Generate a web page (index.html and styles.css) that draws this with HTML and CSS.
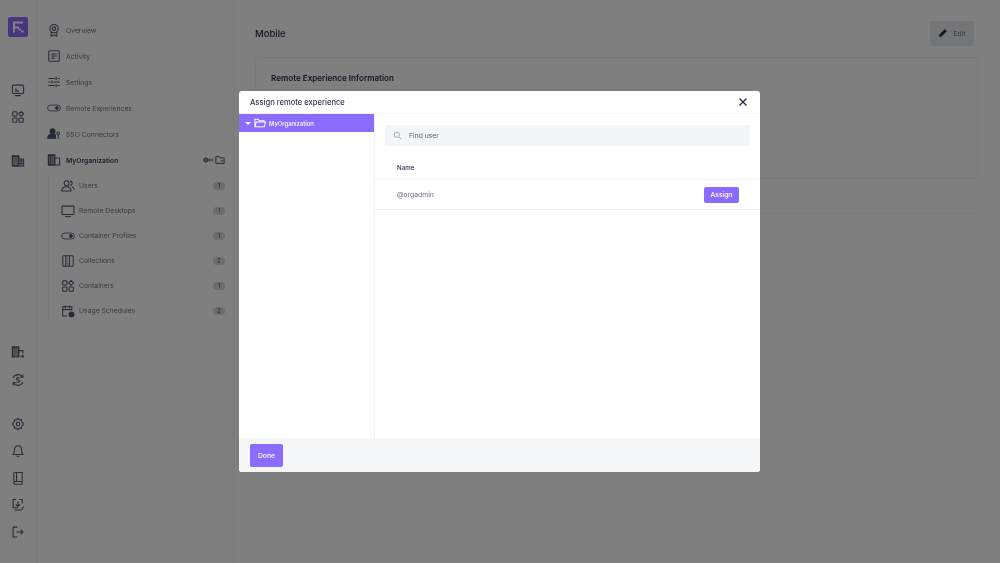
FILE: index.html
```html
<!DOCTYPE html>
<html lang="en">
<head>
<meta charset="utf-8">
<title>Assign remote experience</title>
<link rel="stylesheet" href="styles.css">
</head>
<body>
<div class="app">
  <aside class="rail">
    <div class="logo"><svg class="logo-mark" viewBox="0 0 20 20" width="20" height="20"><path d="M5 4.500h10v2H7v3h4v2H7v4H5zM10.500 11.500h2.500v2h-2.500zM13 13.500h2.500v2H13z"/></svg></div>
    <div class="rail-group rail-top">
      <svg class="ic" viewBox="0 0 20 20"><rect x="2" y="3" width="16" height="12" rx="1.500"/><path d="M6 18h8M6 8l5 5M6 11l2 2"/></svg>
      <svg class="ic" viewBox="0 0 20 20"><rect x="2.500" y="2.500" width="6" height="6" rx="1"/><rect x="2.500" y="11.500" width="6" height="6" rx="1"/><rect x="11.500" y="11.500" width="6" height="6" rx="1"/><path d="M14.500 2l3.500 3.500-3.500 3.500-3.500-3.500z"/></svg>
    </div>
    <div class="rail-org">
      <svg class="ic" viewBox="0 0 20 20"><path class="tint" d="M2 3h9v14H2z"/><path d="M2 17V3h9v14M11 7h7v10H2M11 10h7M11 13.500h7M14.500 7v10"/></svg>
    </div>
    <div class="rail-group rail-lower">
      <svg class="ic" viewBox="0 0 20 20"><path class="tint" d="M2 3h9v14H2z"/><path d="M2 17V3h9v14M11 8h6v4M13 16h5M16 14l2 2-2 2"/></svg>
      <svg class="ic" viewBox="0 0 20 20"><path d="M3 7a8 8 0 0 1 14-1M17 13a8 8 0 0 1-14 1M17 2v4h-4M3 18v-4h4M12.500 7.500c-1-1-5-1-5 1s5 1 5 3-4 2-5 1"/></svg>
    </div>
    <div class="rail-group rail-bottom">
      <svg class="ic" viewBox="0 0 20 20"><circle cx="10" cy="10" r="2.500"/><path d="M10 2l2 2.200 3-.2.600 3 2.400 3-2.400 3-.6 3-3-.2-2 2.200-2-2.200-3 .2-.6-3L2 10l2.400-3 .6-3 3 .2z"/></svg>
      <svg class="ic" viewBox="0 0 20 20"><path d="M10 2.500a5 5 0 0 0-5 5c0 5-1.500 6-2 7.500h14c-.5-1.500-2-2.500-2-7.500a5 5 0 0 0-5-5zM8 17.500h4"/></svg>
      <svg class="ic" viewBox="0 0 20 20"><path d="M4 16V4a2 2 0 0 1 2-2h10v13H6a2 2 0 0 0 0 4h10v-4M8 2v13"/></svg>
      <svg class="ic" viewBox="0 0 20 20"><path d="M7 2H3v12h7M12 2h4v6M10 5v7M7 9l3 3 3-3M5 17h10l3-5"/></svg>
      <svg class="ic" viewBox="0 0 20 20"><path d="M9 3H3v14h6M8 10h9M14 7l3 3-3 3"/></svg>
    </div>
  </aside>

  <nav class="side">
    <ul class="menu">
      <li class="item"><svg class="ic" viewBox="0 0 20 20"><circle cx="10" cy="8" r="6"/><circle cx="10" cy="8" r="2.500"/><path d="M6 13v6l4-2 4 2v-6"/></svg><span>Overview</span></li>
      <li class="item"><svg class="ic" viewBox="0 0 20 20"><rect x="2.500" y="2.500" width="15" height="15" rx="1.500"/><path d="M6 7h8M6 10h8M6 13h5"/></svg><span>Activity</span></li>
      <li class="item"><svg class="ic" viewBox="0 0 20 20"><path d="M2 5h9M15 5h3M13 3v4M2 10h3M9 10h9M7 8v4M2 15h9M15 15h3M13 13v4"/></svg><span>Settings</span></li>
      <li class="item"><svg class="ic" viewBox="0 0 24 20"><rect x="1" y="5" width="22" height="10" rx="5"/><circle cx="17" cy="10" r="2.500" class="solid"/></svg><span>Remote Experiences</span></li>
      <li class="item"><svg class="ic" viewBox="0 0 20 20"><circle cx="8" cy="6" r="3.500" class="solid"/><path class="solid" d="M1 16c0-4 3-6 7-6 2 0 3 .5 4 1v5z"/><circle cx="16" cy="9" r="2"/><path d="M16 11v6"/></svg><span>SSO Connectors</span></li>
      <li class="item org"><svg class="ic" viewBox="0 0 20 20"><path class="tint" d="M2 3h9v14H2z"/><path d="M2 17V3h9v14M11 7h7v10H2M5.500 3v14"/></svg><span class="org-name">MyOrganization</span>
        <span class="org-tools"><svg class="ic-s" viewBox="0 0 12 12"><circle cx="3.500" cy="6" r="2.500" class="tint"/><path class="thick" d="M6 6h6"/></svg><svg class="ic-s" viewBox="0 0 12 12"><path d="M1 10V2h4l1 1.500h5V10zM7 7h3"/></svg></span>
      </li>
    </ul>
    <ul class="sub">
      <li class="sub-item"><svg class="ic" viewBox="0 0 20 20"><circle cx="8" cy="6" r="3.500"/><path d="M1 17c0-4 3-6 7-6s6 2 6.500 6zM13 3a3 3 0 0 1 0 6M16 11c1.500 1 2.500 2 3 4"/></svg><span>Users</span><b class="badge">1</b></li>
      <li class="sub-item"><svg class="ic" viewBox="0 0 20 20"><rect x="1.500" y="3" width="17" height="12" rx="1"/><path d="M6 18h8"/></svg><span>Remote Desktops</span><b class="badge">1</b></li>
      <li class="sub-item"><svg class="ic" viewBox="0 0 24 20"><rect x="1" y="5" width="22" height="10" rx="5"/><circle cx="17" cy="10" r="2.500" class="solid"/></svg><span>Container Profiles</span><b class="badge">1</b></li>
      <li class="sub-item"><svg class="ic" viewBox="0 0 20 20"><rect x="2.500" y="2.500" width="15" height="15" rx="1.500"/><path d="M7 3v14M12 3v14M9 6h1M9 10h1M9 14h1"/></svg><span>Collections</span><b class="badge">2</b></li>
      <li class="sub-item"><svg class="ic" viewBox="0 0 20 20"><rect x="2.500" y="2.500" width="6" height="6" rx="1"/><rect x="2.500" y="11.500" width="6" height="6" rx="1"/><rect x="11.500" y="11.500" width="6" height="6" rx="1"/><path d="M14.500 2l3.500 3.500-3.500 3.500-3.500-3.500z"/></svg><span>Containers</span><b class="badge">1</b></li>
      <li class="sub-item"><svg class="ic" viewBox="0 0 20 20"><path d="M9 17H2.500V4h13v5M2.500 8h13M6 2v4M12 2v4"/><circle cx="15" cy="15" r="3.500" class="solid"/></svg><span>Usage Schedules</span><b class="badge">2</b></li>
    </ul>
  </nav>

  <main class="main">
    <header class="head">
      <h1>Mobile</h1>
      <button class="edit"><svg class="ic-e" viewBox="0 0 14 14"><path d="M2 12l.7-3L9.500 2.200l2.300 2.300L5 11.300z"/></svg>Edit</button>
    </header>
    <section class="card"><h2>Remote Experience Information</h2></section>
    <div class="rule"></div>
  </main>
</div>

<div class="overlay">
  <div class="modal">
    <div class="modal-head">
      <span>Assign remote experience</span>
      <svg class="close" viewBox="0 0 10 10"><path d="M1.500 1.500l7 7M8.500 1.500l-7 7"/></svg>
    </div>
    <div class="modal-body">
      <div class="tree">
        <div class="tree-row">
          <i class="caret"></i>
          <svg class="folder" viewBox="0 0 13 10"><path d="M1 9V1h3.500l1 1.500H11V4M1 9l1.500-5H12.500L11 9z"/></svg>
          <span>MyOrganization</span>
        </div>
      </div>
      <div class="pane">
        <div class="search">
          <svg class="mag" viewBox="0 0 12 12"><circle cx="5" cy="5" r="3.500"/><path d="M8 8l3 3"/></svg>
          <span>Find user</span>
        </div>
        <div class="th">Name</div>
        <div class="tr"><span>@orgadmin</span><button class="assign">Assign</button></div>
      </div>
    </div>
    <div class="modal-foot"><button class="done">Done</button></div>
  </div>
</div>
</body>
</html>
```
FILE: styles.css
```css
* { box-sizing: border-box; }
html, body { margin: 0; height: 100%; overflow: hidden; }
body { font-family: Inter, "Liberation Sans", sans-serif; background: #fff; color: #1f2a44; position: relative; }
ul { list-style: none; margin: 0; padding: 0; }
svg { display: block; fill: none; stroke: currentColor; stroke-width: 1.500; }
svg .solid { fill: currentColor; }
svg .tint { fill: currentColor; fill-opacity: .55; }
svg .thick { stroke-width: 3; stroke-opacity: .6; }

.app { display: flex; height: 563px; filter: blur(.35px); }
.rail { width: 37px; flex: none; border-right: 1px solid #f0f0f3; display: flex; flex-direction: column; align-items: center; padding-top: 17px; }
.logo { width: 20px; height: 20px; border-radius: 2px; background: #9069ff; }
.logo-mark { fill: #fff; stroke: none; }
.ic { width: 14px; height: 14px; flex: none; color: #4e566c; }
.rail-group { display: flex; flex-direction: column; gap: 13px; }
.rail-top { margin-top: 46px; }
.rail-org { margin-top: 30px; }
.rail-lower { margin-top: 177px; gap: 14px; }
.rail-bottom { margin-top: 30px; }

.side { width: 197px; flex: none; border-right: 1px solid #f5f5f7; padding: 17px 8px 0 10px; }
.item { height: 26px; display: flex; align-items: center; gap: 5px; font-size: 6.800px; color: #6c7285; }
.org { font-weight: 600; color: #3a4258; }
.org-name { flex: 1; }
.org-tools { display: flex; gap: 2px; }
.ic-s { width: 10px; height: 10px; color: #4e566c; stroke-width: 1.200; }
.sub { margin-left: 1px; padding-left: 12px; border-left: 1px solid #f5f5f7; }
.sub-item { height: 25px; display: flex; align-items: center; gap: 4px; font-size: 6.800px; color: #6c7285; }
.sub-item span { flex: 1; }
.badge { font-weight: 500; font-size: 5.500px; min-width: 12px; height: 8px; border-radius: 4px; background: #d8d9df; display: flex; align-items: center; justify-content: center; color: #4e566c; }

.main { flex: 1; padding: 20px 22px 0 21px; }
.head { display: flex; justify-content: space-between; align-items: center; height: 26px; margin-right: 4px; }
h1 { font-size: 9.500px; font-weight: 500; margin: 0; color: #1f2a44; }
.edit { width: 44px; height: 25px; border: 0; border-radius: 2px; background: #e9eaef; font: 6.800px Inter, sans-serif; color: #6c7285; display: flex; align-items: center; justify-content: center; gap: 5px; padding: 0; }
.ic-e { width: 10px; height: 10px; fill: #1f2a44; stroke: #1f2a44; stroke-width: 1; }
.card { margin-top: 11px; height: 122px; border: 1px solid #f3f3f6; border-radius: 3px; padding: 15px 15px; }
h2 { font-size: 8.100px; font-weight: 600; margin: 0; color: #1f2a44; }
.rule { margin-top: 34px; height: 1px; background: #f5f5f7; }

.overlay { position: absolute; inset: 0; background: rgba(0, 0, 0, .5); display: flex; align-items: flex-start; justify-content: center; padding-top: 91px; }
.modal { width: 521px; height: 381px; margin-right: 1px; background: #fff; border-radius: 3px; display: flex; flex-direction: column; overflow: hidden; filter: blur(.25px); }
.modal-head { height: 23px; flex: none; display: flex; align-items: center; justify-content: space-between; padding: 0 12px 0 11px; font-size: 7.600px; font-weight: 500; color: #2c3448; border-bottom: 1px solid #f5f5f8; }
.close { width: 10px; height: 10px; color: #1f2a44; stroke-width: 1.300; }
.modal-body { flex: 1; display: flex; min-height: 0; }
.tree { width: 136px; flex: none; border-right: 1px solid #f1f2f5; }
.tree-row { height: 18px; width: 135px; background: #8c6cff; display: flex; align-items: center; color: #fff; font-size: 5.900px; font-weight: 500; padding-left: 6px; }
.caret { width: 0; height: 0; border-left: 3px solid transparent; border-right: 3px solid transparent; border-top: 3px solid #fff; margin-right: 3px; }
.folder { width: 12px; height: 10px; margin-right: 3px; stroke-width: 1.100; color: #fff; }
.pane { flex: 1; padding-top: 11px; }
.search { height: 21px; margin: 0 10px; background: #f4f5f8; border-radius: 2px; display: flex; align-items: center; padding-left: 8px; gap: 7px; font-size: 6.800px; color: #5a6073; }
.mag { width: 9px; height: 9px; color: #8a8f9c; stroke-width: 1; }
.th { height: 34px; padding: 10px 22px 0; display: flex; align-items: center; font-size: 6.200px; font-weight: 500; color: #2c3448; border-bottom: 1px solid #f1f2f5; }
.tr { height: 30px; padding: 0 21px 0 22px; display: flex; align-items: center; justify-content: space-between; font-size: 6.800px; color: #6b7080; border-bottom: 1px solid #f1f2f5; }
.assign { width: 35px; height: 16px; border: 0; border-radius: 2px; background: #8c6cff; color: #fff; font: 500 6.700px Inter, sans-serif; padding: 0; }
.modal-foot { height: 34px; flex: none; display: flex; align-items: flex-start; background: #f5f6f8; padding: 6px 11px; }
.done { width: 33px; height: 23px; border: 0; border-radius: 2px; background: #8c6cff; color: #fff; font: 500 6.800px Inter, sans-serif; padding: 0; }
```
